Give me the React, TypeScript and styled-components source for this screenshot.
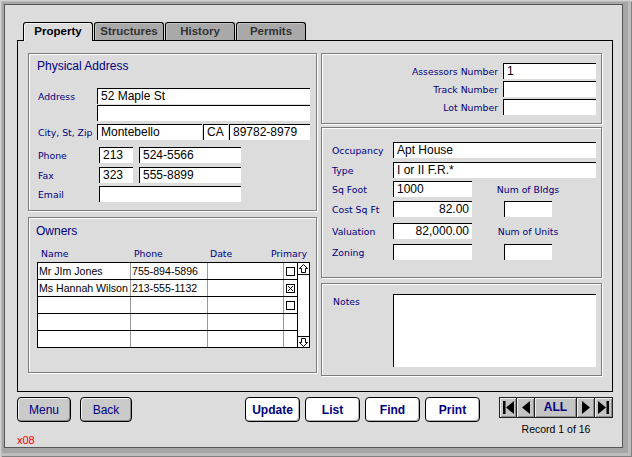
import React from "react";
import styled, { createGlobalStyle } from "styled-components";

const NAVY = "#000080";
const BG = "#dcdcdc";
const LABEL_FONT = `"DejaVu Sans", Verdana, sans-serif`;
const TEXT_FONT = `"Liberation Sans", Arial, sans-serif`;

const GlobalStyle = createGlobalStyle`
  html, body { margin: 0; padding: 0; }
  body { font-family: ${TEXT_FONT}; }
  * { box-sizing: border-box; }
`;

const Frame = styled.div`
  width: 632px;
  height: 457px;
  display: flex;
  padding: 4px 9px 9px 4px;
  background: #a6a6a6;
  box-shadow: inset 1px 1px 0 #cfcfcf, inset 2px 2px 0 #bababa, inset -1px -1px 0 #808080,
    inset -4px -4px 0 #bdbdbd;
`;

const Window = styled.div`
  flex: 1;
  display: flex;
  flex-direction: column;
  background: ${BG};
  border: 1px solid #555;
  padding: 17px 9px 0 12px;
`;

const TabRow = styled.div`
  display: flex;
  align-items: flex-end;
  gap: 1px;
  height: 18px;
  margin-left: 6px;
  position: relative;
  z-index: 1;
`;

const Tab = styled.div<{ $active?: boolean }>`
  width: 70px;
  height: ${(p) => (p.$active ? 19 : 18)}px;
  margin-bottom: ${(p) => (p.$active ? -1 : 0)}px;
  border: 1px solid #000;
  border-bottom: none;
  border-radius: 3px 3px 0 0;
  background: ${(p) => (p.$active ? BG : "#a9a9a9")};
  box-shadow: inset 1px 1px 0 ${(p) => (p.$active ? "#f4f4f4" : "#c4c4c4")};
  color: ${(p) => (p.$active ? "#000" : "#333")};
  font: bold 11.5px/17px ${TEXT_FONT};
  text-align: center;
`;

const Sheet = styled.div`
  height: 354px;
  border: 1px solid #000;
  padding: 12px 10px 0 10px;
  display: grid;
  grid-template-columns: 289px 281px;
  column-gap: 4px;
  align-items: start;
`;

const Column = styled.div`
  display: flex;
  flex-direction: column;
`;

const Panel = styled.div<{ $h: number; $pad: string; $mt?: number }>`
  height: ${(p) => p.$h}px;
  margin-top: ${(p) => p.$mt ?? 0}px;
  padding: ${(p) => p.$pad};
  border: 1px solid #7c7c7c;
  box-shadow: 1px 1px 0 #fff, inset 1px 1px 0 #fff;
  display: flex;
  flex-direction: column;
`;

const Title = styled.div`
  margin-left: -1px;
  font: 12px/14px ${TEXT_FONT};
  color: ${NAVY};
`;

const Row = styled.div<{ $mt: number; $top?: boolean }>`
  display: flex;
  align-items: ${(p) => (p.$top ? "flex-start" : "center")};
  margin-top: ${(p) => p.$mt}px;
`;

const Label = styled.span<{ $w?: number; $pt?: number }>`
  ${(p) => (p.$w ? `width: ${p.$w}px;` : "")}
  flex-shrink: 0;
  padding-top: ${(p) => p.$pt ?? 0}px;
  font: 9.3px/11px ${LABEL_FONT};
  color: ${NAVY};
  white-space: nowrap;
`;

const Field = styled.div<{ $w: number; $h?: number; $ml?: number; $right?: boolean }>`
  width: ${(p) => p.$w}px;
  height: ${(p) => p.$h ?? 16}px;
  margin-left: ${(p) => p.$ml ?? 0}px;
  flex-shrink: 0;
  background: #fff;
  border-top: 1px solid #000;
  border-left: 1px solid #000;
  padding: 0 3px;
  font: 12px/15px ${TEXT_FONT};
  color: #000;
  text-align: ${(p) => (p.$right ? "right" : "left")};
  white-space: nowrap;
  overflow: hidden;
`;

const Side = styled.div`
  width: 112px;
  display: flex;
  justify-content: center;
`;

const LabelGrid = styled.div`
  display: grid;
  grid-template-columns: 1fr 93px;
  grid-auto-rows: 16px;
  column-gap: 5px;
  row-gap: 2px;
  align-items: center;
  text-align: right;
`;

const HeadRow = styled.div`
  display: grid;
  grid-template-columns: 94px 77px 60px 42px;
  margin-top: 10px;
`;

const Head = styled.span<{ $pl?: number; $right?: boolean }>`
  padding-left: ${(p) => p.$pl ?? 0}px;
  padding-right: ${(p) => (p.$right ? 3 : 0)}px;
  text-align: ${(p) => (p.$right ? "right" : "left")};
  font: 9.3px/11px ${LABEL_FONT};
  color: ${NAVY};
  white-space: nowrap;
`;

const Table = styled.div`
  display: flex;
  width: 273px;
  height: 86px;
  margin-top: 3px;
  border: 1px solid #000;
  background: #fff;
`;

const Rows = styled.div`
  flex: 1;
  display: flex;
  flex-direction: column;
`;

const OwnerRow = styled.div`
  display: grid;
  grid-template-columns: 93px 77px 76px 13px;
  height: 17px;
  border-bottom: 1px solid #000;
  &:last-child {
    height: 16px;
    border-bottom: none;
  }
`;

const Cell = styled.div`
  border-right: 1px solid #9a9a9a;
  padding-left: 1px;
  font: 10.6px/16px ${TEXT_FONT};
  color: #000;
  white-space: nowrap;
  overflow: hidden;
`;

const CheckCell = styled.div`
  display: flex;
  align-items: center;
  justify-content: center;
`;

const Scroll = styled.div`
  width: 12px;
  border-left: 1px solid #000;
  display: flex;
  flex-direction: column;
  justify-content: space-between;
`;

const ScrollBtn = styled.div<{ $down?: boolean }>`
  height: ${(p) => (p.$down ? 11 : 12)}px;
  ${(p) => (p.$down ? "border-top: 1px solid #000;" : "border-bottom: 1px solid #000;")}
  display: flex;
  align-items: center;
  justify-content: center;
`;

const Footer = styled.div`
  display: flex;
  align-items: flex-start;
  margin-top: 5px;
`;

const LeftGroup = styled.div`
  display: flex;
  flex-direction: column;
`;

const ButtonRow = styled.div<{ $gap: number; $ml?: number }>`
  display: flex;
  gap: ${(p) => p.$gap}px;
  margin-left: ${(p) => p.$ml ?? 0}px;
`;

const Button = styled.button<{ $w: number; $plain?: boolean }>`
  width: ${(p) => p.$w}px;
  height: 25px;
  padding: 0;
  border: 1px solid #000;
  border-radius: 4px;
  background: ${(p) => (p.$plain ? "#cacaca" : "#fff")};
  box-shadow: ${(p) =>
    p.$plain ? "inset 1px 1px 0 #f2f2f2, inset -1px -1px 0 #8a8a8a" : "inset -1px -1px 0 #b0b0b0"};
  color: ${NAVY};
  font: ${(p) => (p.$plain ? "normal" : "bold")} 12px/22px ${TEXT_FONT};
  text-align: center;
`;

const Version = styled.div`
  margin-top: 12px;
  color: #ff0000;
  font: 11px/13px ${TEXT_FONT};
`;

const RightGroup = styled.div`
  margin-left: auto;
  display: flex;
  flex-direction: column;
  align-items: center;
`;

const NavBar = styled.div`
  display: flex;
  width: 114px;
  height: 21px;
  border: 1px solid #222;
  background: #c4c4c4;
`;

const NavSeg = styled.div<{ $w: number }>`
  width: ${(p) => p.$w}px;
  display: flex;
  align-items: center;
  justify-content: center;
  border-right: 1px solid #222;
  box-shadow: inset 1px 1px 0 #efefef, inset -1px -1px 0 #8c8c8c;
  color: ${NAVY};
  font: bold 12px/19px ${TEXT_FONT};
  &:last-child {
    border-right: none;
  }
`;

const RecordText = styled.div`
  margin-top: 5px;
  font: 10.5px/12px ${TEXT_FONT};
  color: #000;
`;

const Check = ({ on }: { on?: boolean }) => (
  <svg width="9" height="9" viewBox="0 0 9 9">
    <rect x="0.5" y="0.5" width="8" height="8" fill="#fff" stroke="#000" />
    {on && <path d="M2 2 L7 7 M7 2 L2 7" stroke="#000" strokeWidth="1" />}
  </svg>
);

const ScrollArrow = ({ down }: { down?: boolean }) => (
  <svg width="11" height="11" viewBox="0 0 11 11" style={down ? { transform: "rotate(180deg)" } : undefined}>
    <polygon
      points="5.5,1.5 9.5,5.5 7.5,5.5 7.5,9.5 3.5,9.5 3.5,5.5 1.5,5.5"
      fill="#fff"
      stroke="#000"
      strokeWidth="1"
    />
  </svg>
);

type NavIconKind = "first" | "prev" | "next" | "last";

const NavIcon = ({ kind }: { kind: NavIconKind }) => (
  <svg width="16" height="19" viewBox="0 0 16 19">
    {kind === "first" && (
      <>
        <rect x="3" y="3" width="2.5" height="13" fill="#000" />
        <polygon points="6,9.5 14,3 14,16" fill="#000" />
      </>
    )}
    {kind === "prev" && <polygon points="4,9.5 12,3 12,16" fill="#000" />}
    {kind === "next" && <polygon points="4,3 12,9.5 4,16" fill="#000" />}
    {kind === "last" && (
      <>
        <polygon points="2,3 10,9.5 2,16" fill="#000" />
        <rect x="10.5" y="3" width="2.5" height="13" fill="#000" />
      </>
    )}
  </svg>
);

const owners = [
  { name: "Mr JIm Jones", phone: "755-894-5896", date: "", check: true, on: false },
  { name: "Ms Hannah Wilson", phone: "213-555-1132", date: "", check: true, on: true },
  { name: "", phone: "", date: "", check: true, on: false },
  { name: "", phone: "", date: "", check: false, on: false },
  { name: "", phone: "", date: "", check: false, on: false },
];

const tabs = ["Property", "Structures", "History", "Permits"];

export default function App() {
  return (
    <>
      <GlobalStyle />
      <Frame>
        <Window>
          <TabRow>
            {tabs.map((t, i) => (
              <Tab key={t} $active={i === 0}>
                {t}
              </Tab>
            ))}
          </TabRow>

          <Sheet>
            <Column>
              <Panel $h={158} $pad="5px 7px 0 9px">
                <Title>Physical Address</Title>
                <Row $mt={15}>
                  <Label $w={59}>Address</Label>
                  <Field $w={213}>52 Maple St</Field>
                </Row>
                <Row $mt={1}>
                  <Label $w={59} />
                  <Field $w={213} />
                </Row>
                <Row $mt={3}>
                  <Label $w={59}>City, St, Zip</Label>
                  <Field $w={105}>Montebello</Field>
                  <Field $w={25} $ml={1}>
                    CA
                  </Field>
                  <Field $w={81} $ml={1}>
                    89782-8979
                  </Field>
                </Row>
                <Row $mt={7}>
                  <Label $w={61}>Phone</Label>
                  <Field $w={34}>213</Field>
                  <Field $w={102} $ml={6}>
                    524-5566
                  </Field>
                </Row>
                <Row $mt={4}>
                  <Label $w={61}>Fax</Label>
                  <Field $w={34}>323</Field>
                  <Field $w={102} $ml={6}>
                    555-8899
                  </Field>
                </Row>
                <Row $mt={3}>
                  <Label $w={61}>Email</Label>
                  <Field $w={142} />
                </Row>
              </Panel>

              <Panel $h={156} $mt={6} $pad="6px 7px 0 8px">
                <Title>Owners</Title>
                <HeadRow>
                  <Head $pl={4}>Name</Head>
                  <Head $pl={3}>Phone</Head>
                  <Head $pl={2}>Date</Head>
                  <Head $right>Primary</Head>
                </HeadRow>
                <Table>
                  <Rows>
                    {owners.map((o, i) => (
                      <OwnerRow key={i}>
                        <Cell>{o.name}</Cell>
                        <Cell>{o.phone}</Cell>
                        <Cell>{o.date}</Cell>
                        <CheckCell>{o.check && <Check on={o.on} />}</CheckCell>
                      </OwnerRow>
                    ))}
                  </Rows>
                  <Scroll>
                    <ScrollBtn>
                      <ScrollArrow />
                    </ScrollBtn>
                    <ScrollBtn $down>
                      <ScrollArrow down />
                    </ScrollBtn>
                  </Scroll>
                </Table>
              </Panel>
            </Column>

            <Column>
              <Panel $h={71} $pad="9px 5px 0 0">
                <LabelGrid>
                  <Label>Assessors Number</Label>
                  <Field $w={93}>1</Field>
                  <Label>Track Number</Label>
                  <Field $w={93} />
                  <Label>Lot Number</Label>
                  <Field $w={93} />
                </LabelGrid>
              </Panel>

              <Panel $h={151} $mt={3} $pad="14px 5px 0 10px">
                <Row $mt={0}>
                  <Label $w={61}>Occupancy</Label>
                  <Field $w={203}>Apt House</Field>
                </Row>
                <Row $mt={4}>
                  <Label $w={61}>Type</Label>
                  <Field $w={203}>I or II F.R.*</Field>
                </Row>
                <Row $mt={3}>
                  <Label $w={61}>Sq Foot</Label>
                  <Field $w={79}>1000</Field>
                  <Side>
                    <Label>Num of Bldgs</Label>
                  </Side>
                </Row>
                <Row $mt={4}>
                  <Label $w={61}>Cost Sq Ft</Label>
                  <Field $w={79} $right>
                    82.00
                  </Field>
                  <Side>
                    <Field $w={48} />
                  </Side>
                </Row>
                <Row $mt={6}>
                  <Label $w={61}>Valuation</Label>
                  <Field $w={79} $right>
                    82,000.00
                  </Field>
                  <Side>
                    <Label>Num of Units</Label>
                  </Side>
                </Row>
                <Row $mt={5}>
                  <Label $w={61}>Zoning</Label>
                  <Field $w={79} />
                  <Side>
                    <Field $w={48} />
                  </Side>
                </Row>
              </Panel>

              <Panel $h={93} $mt={5} $pad="10px 5px 0 11px">
                <Row $mt={0} $top>
                  <Label $w={60} $pt={2}>
                    Notes
                  </Label>
                  <Field $w={203} $h={73} />
                </Row>
              </Panel>
            </Column>
          </Sheet>

          <Footer>
            <LeftGroup>
              <ButtonRow $gap={9}>
                <Button $w={54} $plain>
                  Menu
                </Button>
                <Button $w={52} $plain>
                  Back
                </Button>
              </ButtonRow>
              <Version>x08</Version>
            </LeftGroup>

            <ButtonRow $gap={5} $ml={113}>
              <Button $w={55}>Update</Button>
              <Button $w={55}>List</Button>
              <Button $w={55}>Find</Button>
              <Button $w={55}>Print</Button>
            </ButtonRow>

            <RightGroup>
              <NavBar>
                <NavSeg $w={17}>
                  <NavIcon kind="first" />
                </NavSeg>
                <NavSeg $w={18}>
                  <NavIcon kind="prev" />
                </NavSeg>
                <NavSeg $w={42}>ALL</NavSeg>
                <NavSeg $w={18}>
                  <NavIcon kind="next" />
                </NavSeg>
                <NavSeg $w={17}>
                  <NavIcon kind="last" />
                </NavSeg>
              </NavBar>
              <RecordText>Record 1 of 16</RecordText>
            </RightGroup>
          </Footer>
        </Window>
      </Frame>
    </>
  );
}
